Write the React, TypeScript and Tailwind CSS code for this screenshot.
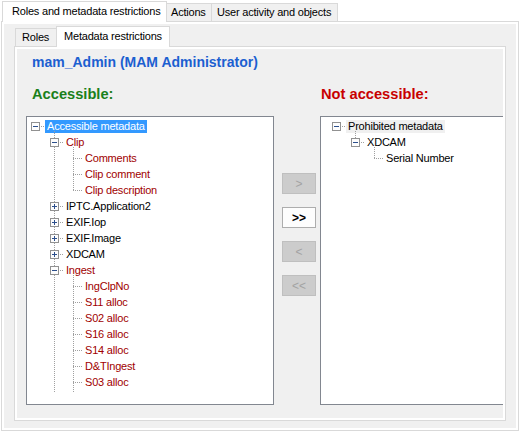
import React from 'react';

type TreeNode = {
  label: string;
  level: number;
  box?: 'minus' | 'plus';
  red?: boolean;
  selected?: 'focus' | 'blur';
};

// vertical dotted line: x, y from, y to (tree inner coords)
type VLine = [number, number, number];

const ROW = 16;
const INDENT = 19;
const rowCenter = (i: number) => 9 + ROW * i;

const accessibleNodes: TreeNode[] = [
  { label: 'Accessible metadata', level: 0, box: 'minus', selected: 'focus' },
  { label: 'Clip', level: 1, box: 'minus', red: true },
  { label: 'Comments', level: 2, red: true },
  { label: 'Clip comment', level: 2, red: true },
  { label: 'Clip description', level: 2, red: true },
  { label: 'IPTC.Application2', level: 1, box: 'plus' },
  { label: 'EXIF.Iop', level: 1, box: 'plus' },
  { label: 'EXIF.Image', level: 1, box: 'plus' },
  { label: 'XDCAM', level: 1, box: 'plus' },
  { label: 'Ingest', level: 1, box: 'minus', red: true },
  { label: 'IngClpNo', level: 2, red: true },
  { label: 'S11 alloc', level: 2, red: true },
  { label: 'S02 alloc', level: 2, red: true },
  { label: 'S16 alloc', level: 2, red: true },
  { label: 'S14 alloc', level: 2, red: true },
  { label: 'D&TIngest', level: 2, red: true },
  { label: 'S03 alloc', level: 2, red: true },
];

const prohibitedNodes: TreeNode[] = [
  { label: 'Prohibited metadata', level: 0, box: 'minus', selected: 'blur' },
  { label: 'XDCAM', level: 1, box: 'minus' },
  { label: 'Serial Number', level: 2 },
];

const MetaTree = ({
  nodes,
  baseX,
  indents,
  vLines,
  className,
}: {
  nodes: TreeNode[];
  baseX: number;
  indents: string[];
  vLines: VLine[];
  className: string;
}) => {
  return (
    <div className={`relative h-[289px] bg-white border border-[#828790] overflow-hidden ${className}`}>
      <svg className="absolute left-0 top-0 pointer-events-none" width="260" height="290">
        <g stroke="#a0a0a0" strokeDasharray="1 1" shapeRendering="crispEdges">
          {vLines.map(([x, y1, y2], i) => (
            <line key={`v${i}`} x1={x + 0.5} y1={y1} x2={x + 0.5} y2={y2} />
          ))}
          {nodes.map((node, i) => {
            const cx = baseX + INDENT * node.level;
            const cy = rowCenter(i);
            return <line key={`h${i}`} x1={cx} y1={cy + 0.5} x2={cx + 10} y2={cy + 0.5} />;
          })}
        </g>
        {nodes.map((node, i) => {
          if (!node.box) return null;
          const cx = baseX + INDENT * node.level;
          const cy = rowCenter(i);
          return (
            <g key={`b${i}`} shapeRendering="crispEdges">
              <rect x={cx - 3.5} y={cy - 3.5} width="8" height="8" fill="#fdfdfd" stroke="#919191" />
              <line x1={cx - 2} y1={cy + 0.5} x2={cx + 3} y2={cy + 0.5} stroke="#2c4f8c" />
              {node.box === 'plus' && (
                <line x1={cx + 0.5} y1={cy - 2} x2={cx + 0.5} y2={cy + 3} stroke="#2c4f8c" />
              )}
            </g>
          );
        })}
      </svg>
      <div className="pt-[1px]">
        {nodes.map((node, i) => (
          <div key={`${node.label}_${i}`} className={`h-[16px] flex items-center whitespace-nowrap ${indents[node.level]}`}>
            <span
              className={`inline-block h-[13px] leading-[13px] px-[2px] tracking-[-0.2px] ${
                node.selected === 'focus'
                  ? 'bg-[#3399ff] text-white'
                  : node.selected === 'blur'
                  ? 'bg-[#f0f0f0] text-black'
                  : node.red
                  ? 'text-[#a00000]'
                  : 'text-black'
              }`}
            >
              {node.label}
            </span>
          </div>
        ))}
      </div>
    </div>
  );
};

const MoveButton = ({ label, enabled }: { label: string; enabled?: boolean }) => (
  <div
    className={`w-[34px] h-[21px] flex items-center justify-center border ${
      enabled
        ? 'bg-[#fdfdfd] border-[#adadad] text-black font-bold text-[12px]'
        : 'bg-[#cccccc] border-[#bfbfbf] text-[#a3a3a3] text-[12px]'
    }`}
  >
    {label}
  </div>
);

export default function App() {
  return (
    <div className="w-[521px] h-[435px] bg-white overflow-hidden font-['Liberation_Sans',Arial,sans-serif] text-[11px] text-black">
      <div className="ml-[1px] w-[518px]">
        {/* outer tabs */}
        <div className="flex items-end h-[21px] pt-[1px] tracking-[-0.2px]">
          <div className="relative z-10 -mb-px ml-[1px] w-[165px] h-[21px] bg-white border border-b-0 border-[#d9d9d9] pl-[9px] leading-[18px]">
            Roles and metadata restrictions
          </div>
          <div className="w-[45px] h-[18px] bg-[#f0f0f0] border-t border-r border-[#d9d9d9] pl-[4px] leading-[17px]">
            Actions
          </div>
          <div className="w-[126px] h-[18px] bg-[#f0f0f0] border-t border-r border-[#d9d9d9] pl-[5px] leading-[17px]">
            User activity and objects
          </div>
        </div>

        <div className="h-[410px] border border-[#d9d9d9] bg-white p-[2px]">
          <div className="h-full bg-[#f0f0f0] pl-[10px] pt-[2px]">
            {/* inner tabs */}
            <div className="flex items-end h-[20px] tracking-[-0.2px]">
              <div className="ml-[1px] w-[41px] h-[18px] bg-[#f0f0f0] border-l border-t border-[#d9d9d9] pl-[6px] leading-[17px]">
                Roles
              </div>
              <div className="relative z-10 -mb-px w-[114px] h-[21px] bg-white border border-b-0 border-[#d9d9d9] pl-[7px] leading-[18px]">
                Metadata restrictions
              </div>
            </div>

            <div className="w-[492px] h-[375px] border border-[#d9d9d9] bg-white p-[2px]">
              <div className="h-full bg-[#f0f0f0] pl-[9px] pt-[5px] overflow-hidden">
                <div className="pl-[6px] text-[14px] leading-[16px] font-bold text-[#1c5fd0]">
                  mam_Admin (MAM Administrator)
                </div>

                <div className="flex items-start mt-[14px]">
                  <div className="w-[248px] shrink-0">
                    <div className="h-[20px] leading-[20px] pl-[6px] text-[14.67px] font-bold text-[#1a801a]">
                      Accessible:
                    </div>
                    <MetaTree
                      className="mt-[12px] w-[248px]"
                      nodes={accessibleNodes}
                      baseX={8}
                      indents={['pl-[18px]', 'pl-[37px]', 'pl-[56px]']}
                      vLines={[
                        [27, 14, 276],
                        [46, 30, 73],
                        [46, 158, 276],
                      ]}
                    />
                  </div>

                  <div className="ml-[8px] pt-[89px] flex flex-col gap-[13px] shrink-0">
                    <MoveButton label=">" />
                    <MoveButton label=">>" enabled />
                    <MoveButton label="<" />
                    <MoveButton label="<<" />
                  </div>

                  <div className="ml-[4px] w-[184px] shrink-0">
                    <div className="h-[20px] leading-[20px] pl-[1px] text-[14.67px] font-bold text-[#c80000]">
                      Not accessible:
                    </div>
                    <MetaTree
                      className="mt-[12px] w-[184px]"
                      nodes={prohibitedNodes}
                      baseX={15}
                      indents={['pl-[25px]', 'pl-[44px]', 'pl-[63px]']}
                      vLines={[
                        [34, 14, 25],
                        [53, 30, 41],
                      ]}
                    />
                  </div>
                </div>
              </div>
            </div>
          </div>
        </div>
      </div>
    </div>
  );
}
